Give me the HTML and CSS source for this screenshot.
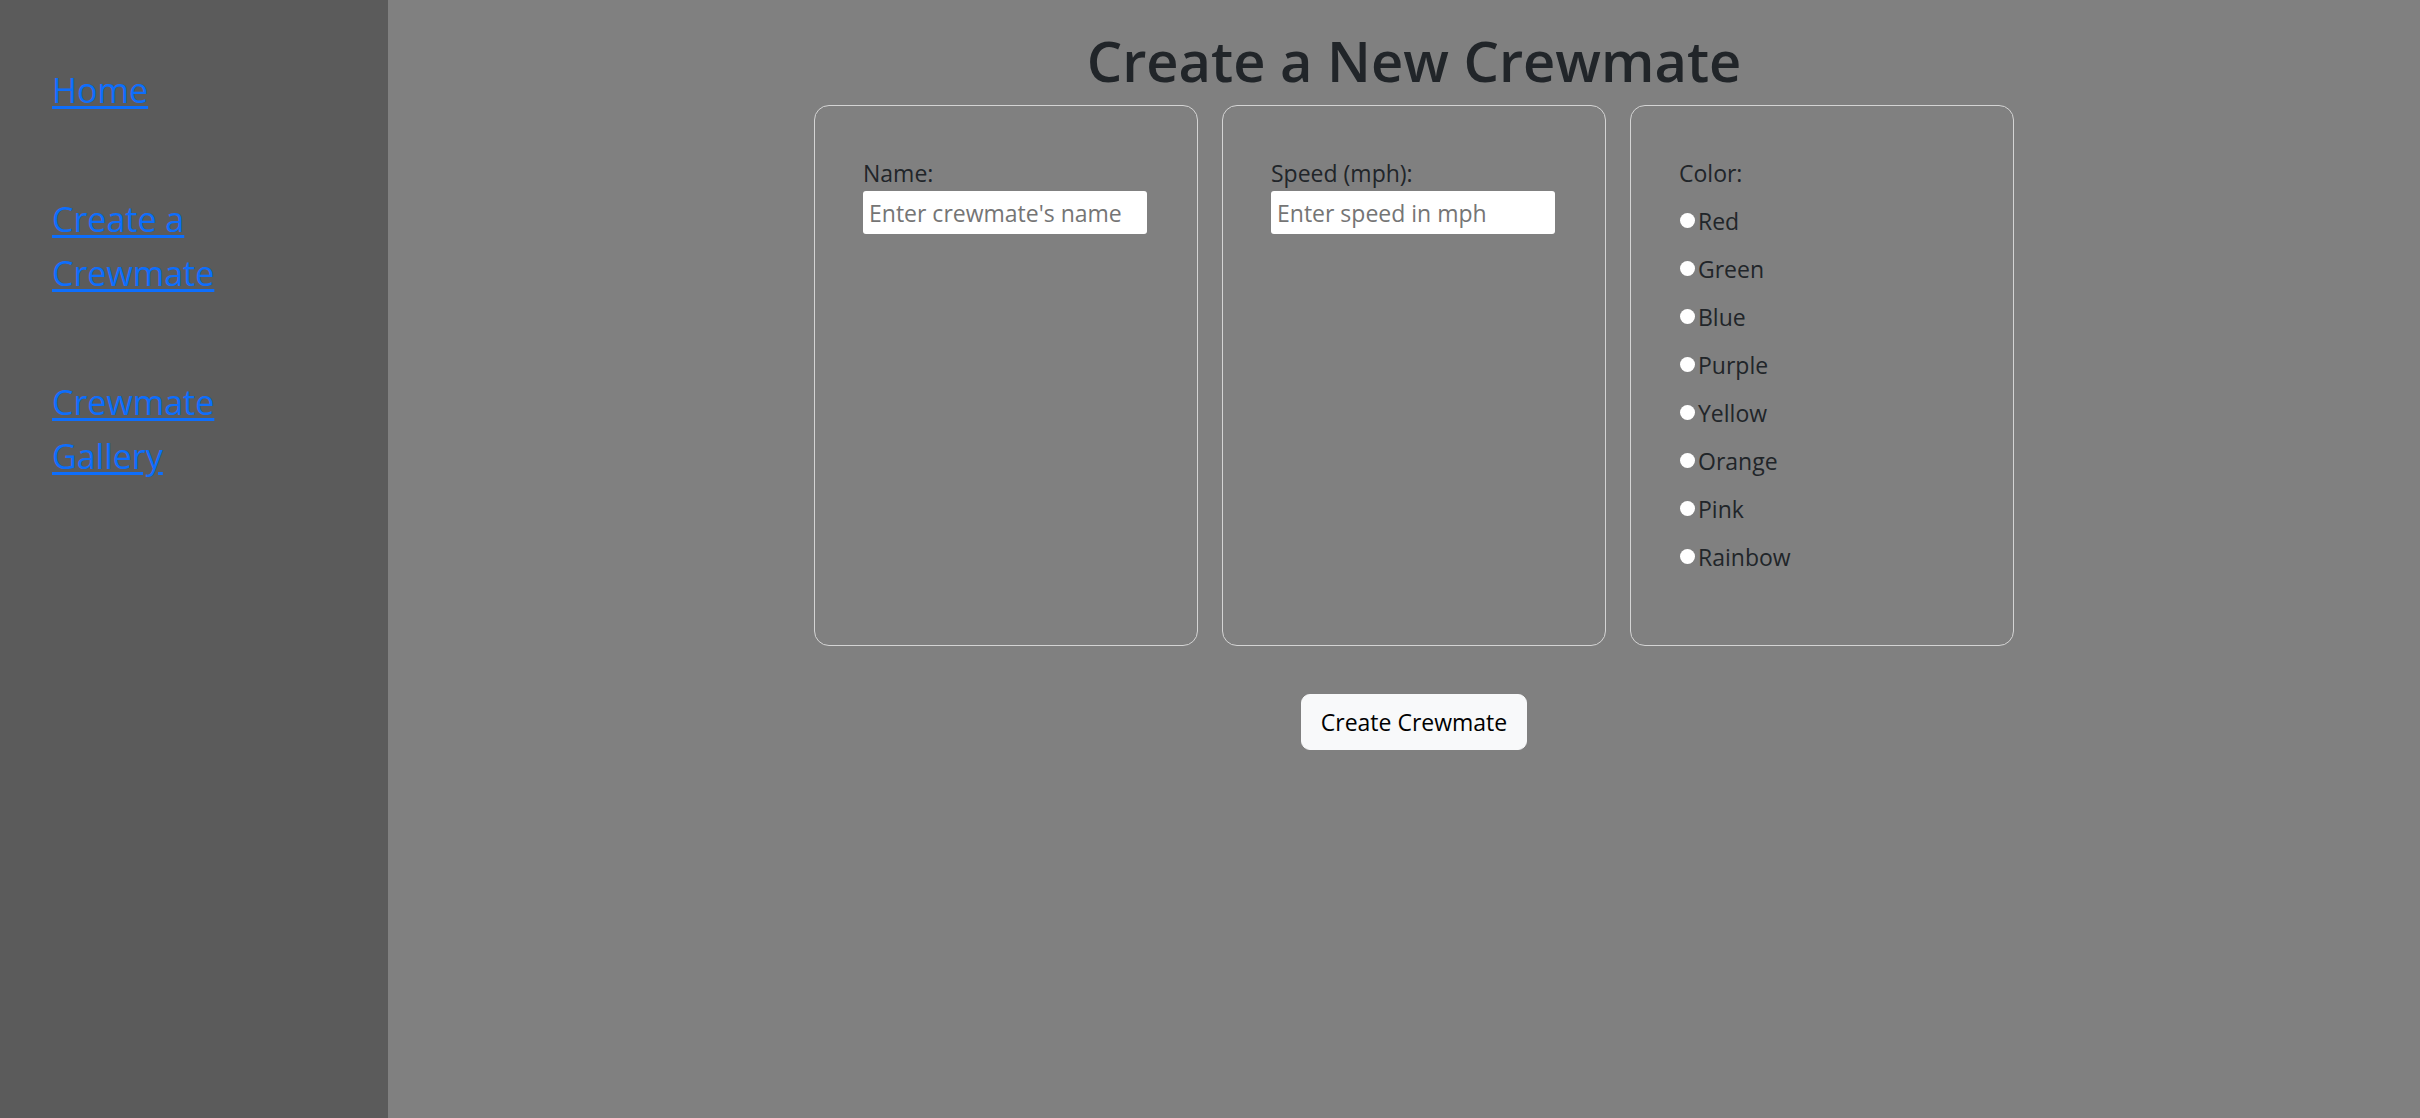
FILE: index.html
```html
<!DOCTYPE html>
<html lang="en">
<head>
<meta charset="utf-8">
<title>Create a New Crewmate</title>
<link rel="stylesheet" href="styles.css">
</head>
<body>
<div class="app">
  <aside class="sidebar">
    <nav class="nav">
      <a class="nav-link" href="#">Home</a>
      <a class="nav-link" href="#">Create a Crewmate</a>
      <a class="nav-link" href="#">Crewmate Gallery</a>
    </nav>
  </aside>
  <main class="main">
    <h1 class="title">Create a New Crewmate</h1>
    <form class="form">
      <div class="cards">
        <div class="card">
          <label class="field-label" for="name">Name:</label>
          <input class="text-input" id="name" type="text" placeholder="Enter crewmate's name">
        </div>
        <div class="card">
          <label class="field-label" for="speed">Speed (mph):</label>
          <input class="text-input" id="speed" type="text" placeholder="Enter speed in mph">
        </div>
        <div class="card">
          <div class="field-label">Color:</div>
          <label class="radio-row"><input class="radio" type="radio" name="color">Red</label>
          <label class="radio-row"><input class="radio" type="radio" name="color">Green</label>
          <label class="radio-row"><input class="radio" type="radio" name="color">Blue</label>
          <label class="radio-row"><input class="radio" type="radio" name="color">Purple</label>
          <label class="radio-row"><input class="radio" type="radio" name="color">Yellow</label>
          <label class="radio-row"><input class="radio" type="radio" name="color">Orange</label>
          <label class="radio-row"><input class="radio" type="radio" name="color">Pink</label>
          <label class="radio-row"><input class="radio" type="radio" name="color">Rainbow</label>
        </div>
      </div>
      <button class="btn" type="button">Create Crewmate</button>
    </form>
  </main>
</div>
</body>
</html>
```

FILE: styles.css
```css
* { box-sizing: border-box; }

html, body {
  margin: 0;
  height: 100%;
}

body {
  font-family: "Open Sans", "Noto Sans", sans-serif;
  font-size: 23px;
  line-height: 1.5;
  color: #212529;
  background: #808080;
}

.app {
  display: flex;
  min-height: 100vh;
}

.sidebar {
  width: 388px;
  flex: 0 0 388px;
  background: #5b5b5b;
  padding: 63px 0 0 52px;
}

.nav {
  display: flex;
  flex-direction: column;
  gap: 75px;
  width: 200px;
}

.nav-link {
  font-size: 34px;
  line-height: 54px;
  color: #0d6efd;
  text-decoration: underline;
  text-underline-offset: 3px;
}

.main {
  flex: 1;
  background: #808080;
  padding-left: 20px;
  display: flex;
  flex-direction: column;
  align-items: center;
}

.title {
  margin: 0 0 12px;
  padding-top: 28px;
  font-size: 56px;
  line-height: 65px;
  font-weight: 600;
  color: #212529;
}

.form {
  display: flex;
  flex-direction: column;
  align-items: center;
}

.cards {
  display: grid;
  grid-template-columns: repeat(3, 384px);
  gap: 24px;
}

.card {
  min-height: 541px;
  border: 1px solid #d4d4d4;
  border-radius: 15px;
  padding: 50px 48px 48px;
}

.field-label {
  display: block;
  line-height: 35px;
}

.text-input {
  display: block;
  width: 284px;
  height: 43px;
  border: none;
  border-radius: 3px;
  padding: 0 6px;
  background: #fff;
  font-family: inherit;
  font-size: 23px;
  color: #212529;
  outline: none;
}

.text-input::placeholder {
  color: #757575;
}

.radio-row {
  display: block;
  margin-top: 12px;
  line-height: 36px;
}

.radio {
  appearance: none;
  -webkit-appearance: none;
  display: inline-block;
  width: 15px;
  height: 15px;
  margin: 0 3px 2px 1px;
  border-radius: 50%;
  background: #fff;
  border: none;
}

.btn {
  margin-top: 48px;
  padding: 9px 19px;
  border: 1px solid #f8f9fa;
  border-radius: 9px;
  background: #f8f9fa;
  font-family: inherit;
  font-size: 23px;
  line-height: 36px;
  color: #000;
}
```
